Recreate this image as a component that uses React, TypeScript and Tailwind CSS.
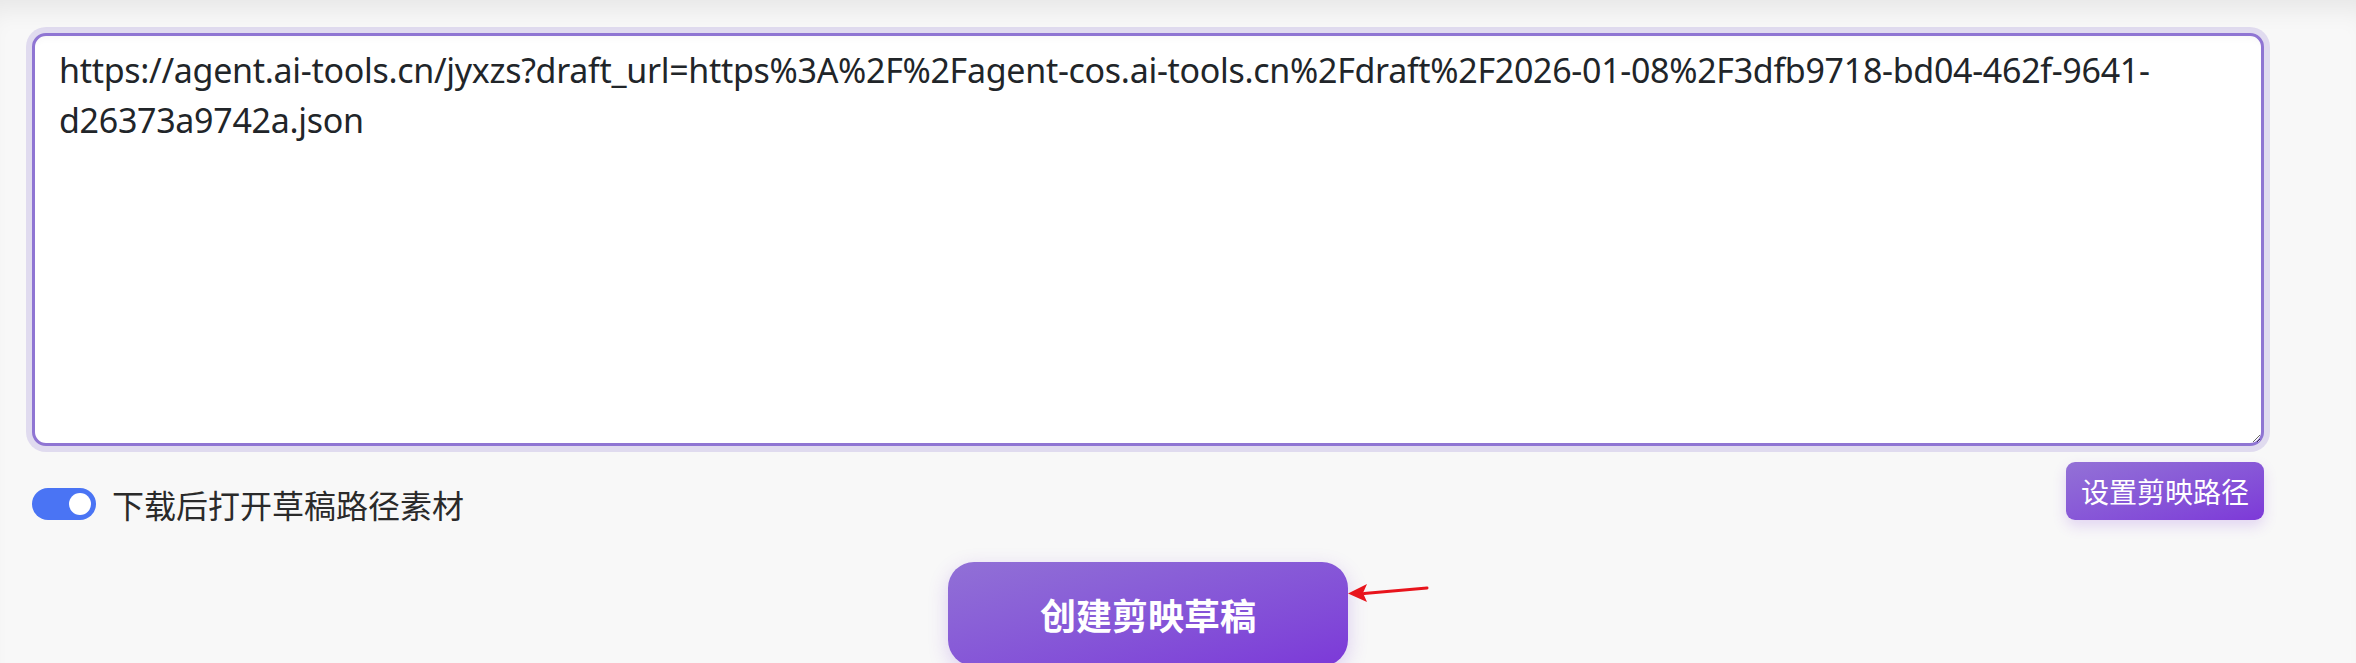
import React, { useState } from 'react';

const draftUrl =
  'https://agent.ai-tools.cn/jyxzs?draft_url=https%3A%2F%2Fagent-cos.ai-tools.cn%2Fdraft%2F2026-01-08%2F3dfb9718-bd04-462f-9641-d26373a9742a.json';

const cjk = '"Noto Sans CJK SC", "Noto Sans", sans-serif';

const App = () => {
  const [url, setUrl] = useState(draftUrl);
  const [openAfter, setOpenAfter] = useState(true);

  return (
    <div
      className="min-h-screen bg-[#f8f8f8] shadow-[inset_0_24px_24px_-14px_rgba(0,0,0,0.07)] pl-[32px] pr-[92px] pt-[33px] overflow-hidden"
      style={{ fontFamily: cjk }}
    >
      {/* Draft url input */}
      <textarea
        value={url}
        onChange={(e) => setUrl(e.target.value)}
        className="block w-full h-[413px] bg-white border-[3px] border-[#8f75d3] rounded-[14px] shadow-[0_0_0_6px_rgba(143,117,211,0.22),inset_0_8px_10px_-8px_rgba(0,0,0,0.05)] px-[24px] pt-[9px] text-[34px] leading-[50px] tracking-[-0.3px] text-[#212529] outline-none"
        style={{ fontFamily: '"Noto Sans", "Open Sans", sans-serif' }}
      />

      {/* Options row */}
      <div className="flex justify-between items-end mt-[16px]">
        <label className="flex items-center gap-[16px] cursor-pointer" onClick={() => setOpenAfter(!openAfter)}>
          <span
            className={
              openAfter
                ? 'flex items-center justify-end w-[64px] h-[32px] rounded-full bg-[#4a74f4] px-[5px]'
                : 'flex items-center justify-start w-[64px] h-[32px] rounded-full bg-[#c9ccd4] px-[5px]'
            }
          >
            <span className="w-[22px] h-[22px] rounded-full bg-white" />
          </span>
          <span className="text-[32px] leading-[32px] text-[#2a2a2a]">下载后打开草稿路径素材</span>
        </label>
        <button className="h-[58px] px-[15px] rounded-[9px] bg-gradient-to-br from-[#9371d6] to-[#7d38d8] text-white text-[28px] leading-[36px] shadow-[0_6px_14px_rgba(125,56,216,0.18)]">
          设置剪映路径
        </button>
      </div>

      {/* Create draft */}
      <div className="flex justify-center mt-[42px]">
        <div className="relative">
          <button className="w-[400px] h-[104px] rounded-[26px] bg-gradient-to-br from-[#9170d6] to-[#7c38d8] text-white text-[36px] font-bold shadow-[0_6px_20px_rgba(125,56,216,0.22)]">
            创建剪映草稿
          </button>
          <svg
            className="absolute left-full top-[20px] w-[82px] h-[22px]"
            viewBox="0 0 82 22"
            fill="none"
          >
            <path d="M16 11.5 L79 6" stroke="#e8141c" strokeWidth="3" strokeLinecap="round" />
            <path d="M0 11.5 L19 2 L15 11 L19 20 Z" fill="#e8141c" />
          </svg>
        </div>
      </div>
    </div>
  );
};

export default App;
